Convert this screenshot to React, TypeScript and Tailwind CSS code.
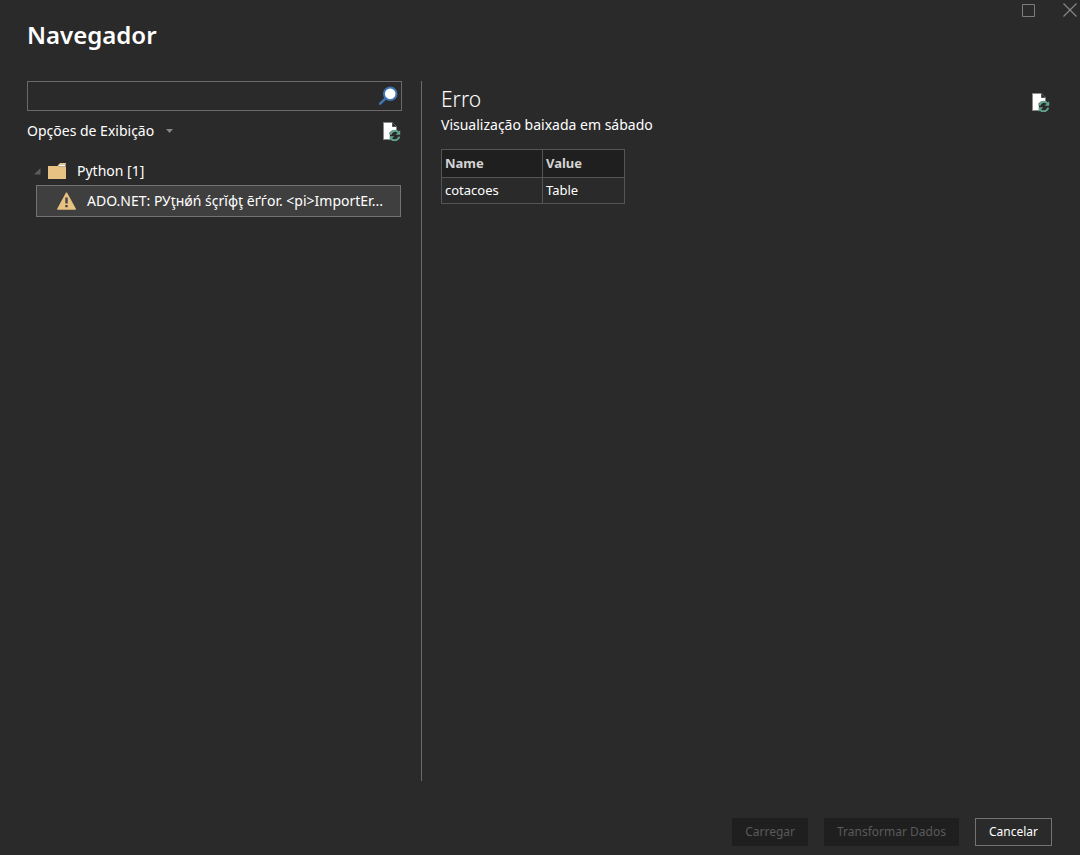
import { useState } from 'react';

interface PreviewRow {
  name: string;
  value: string;
}

const rows: PreviewRow[] = [{ name: 'cotacoes', value: 'Table' }];

function SearchIcon() {
  return (
    <svg width="20" height="20" viewBox="0 0 20 20" aria-hidden="true">
      <path d="M2.2 17.6 8 12" stroke="#3f74b0" strokeWidth="2.6" strokeLinecap="round" />
      <circle cx="12.2" cy="7.800" r="6.3" fill="#fff" stroke="#3f74b0" strokeWidth="2" />
    </svg>
  );
}

function RefreshIcon() {
  return (
    <svg width="19" height="20" viewBox="0 0 19 20" aria-hidden="true">
      <path d="M1.5 1.5h9l4 4v13h-13z" fill="#fff" stroke="#8a8a8a" />
      <path d="M10.5 1.5v4h4" fill="#2a2a2a" stroke="#555" />
      <path d="M7.5 11.5 10 9.5h9V20H8.5z" fill="#2a2a2a" />
      <path d="M8.6 13.6a4.5 4.5 0 0 1 7.8-2.2M17.2 15.6a4.5 4.5 0 0 1-7.8 2.2" fill="none" stroke="#63a58d" strokeWidth="2" />
      <path d="M18.2 9.2v4.6h-4.6zM7.6 19.8v-4.6h4.6z" fill="#63a58d" />
    </svg>
  );
}

function FolderIcon() {
  return (
    <svg width="20" height="18" viewBox="0 0 20 18" aria-hidden="true">
      <path d="M12 2.2h6.500v2.300h-8z" fill="#fff" />
      <path d="M1 4h9.500L13 1h6v1.200h-5.500L11.500 4.500H19V17H1z" fill="#e8c282" />
    </svg>
  );
}

function WarningIcon() {
  return (
    <svg width="20" height="18" viewBox="0 0 20 18" aria-hidden="true">
      <path d="M9.5 1.2 18.3 17H.8z" fill="#e8c282" stroke="#e8c282" strokeWidth="1.4" strokeLinejoin="round" />
      <path d="M8.300 5.500h2.400v6H8.300zM8.300 13h2.400v2.300H8.300z" fill="#444" />
    </svg>
  );
}

export default function App() {
  const [search, setSearch] = useState('');

  return (
    <div className="min-h-screen flex flex-col bg-[#2a2a2a] text-white font-['Noto_Sans','Open_Sans',sans-serif] text-sm">
      <header className="flex items-start justify-between pl-[27px] pr-[3px]">
        <h1 className="pt-[18px] text-2xl leading-[34px] font-semibold">Navegador</h1>
        <div className="flex gap-7 pt-[3px]">
          <button type="button" aria-label="Maximizar">
            <svg width="13" height="13" viewBox="0 0 13 13" aria-hidden="true">
              <path d="M.5.5h12v12H.5z" fill="none" stroke="#7d7d7d" />
            </svg>
          </button>
          <button type="button" aria-label="Fechar">
            <svg width="14" height="14" viewBox="0 0 14 14" aria-hidden="true">
              <path d="m.5.5 13 13M13.5.5l-13 13" fill="none" stroke="#8a8a8a" strokeWidth="1.1" />
            </svg>
          </button>
        </div>
      </header>

      <main className="flex-1 flex mt-[29px] pl-[27px] pr-[30px]">
        <section className="w-[375px] mr-[19px] shrink-0">
          <div className="flex items-center h-[30px] pr-[3px] border border-[#6a6a6a]">
            <input
              type="text"
              aria-label="Pesquisar"
              value={search}
              onChange={(e) => setSearch(e.target.value)}
              className="flex-1 min-w-0 h-full px-2 bg-transparent outline-none"
            />
            <button type="button" aria-label="Buscar">
              <SearchIcon />
            </button>
          </div>

          <div className="flex items-center justify-between mt-2 pr-px">
            <button type="button" className="flex items-center gap-3 leading-6">
              Opções de Exibição
              <svg width="7" height="4" viewBox="0 0 7 4" aria-hidden="true">
                <path d="M0 0h7L3.5 4z" fill="#858585" />
              </svg>
            </button>
            <button type="button" aria-label="Atualizar">
              <RefreshIcon />
            </button>
          </div>

          <ul className="mt-3.5 pl-[7px]">
            <li>
              <button type="button" className="flex items-center h-7">
                <svg width="7" height="7" viewBox="0 0 7 7" aria-hidden="true">
                  <path d="M6.5 0v6.500H0z" fill="#5c5c5c" />
                </svg>
                <span className="ml-1.5 mr-2.5">
                  <FolderIcon />
                </span>
                Python [1]
              </button>
              <ul className="pl-0.5 pr-px">
                <li>
                  <button
                    type="button"
                    className="flex items-center w-full h-8 pl-5 pr-1 bg-[#3f3f3f] border border-[#737373] text-left whitespace-nowrap"
                  >
                    <WarningIcon />
                    <span className="ml-2.5">ADO.NET: РУţнǿń śçrĭφţ ēґѓor. &lt;pi&gt;ImportEr...</span>
                  </button>
                </li>
              </ul>
            </li>
          </ul>
        </section>

        <section className="flex-1 border-l border-[#6a6a6a] pl-[19px]">
          <div className="flex items-start justify-between">
            <div>
              <h2 className="pt-1 text-[21px] leading-7 font-light">Erro</h2>
              <p className="leading-6">Visualização baixada em sábado</p>
            </div>
            <button type="button" aria-label="Atualizar visualização" className="mt-[11px]">
              <RefreshIcon />
            </button>
          </div>

          <table className="mt-3 border-collapse text-left text-[13px]">
            <thead>
              <tr className="h-7 bg-[#1f1f1f] text-[#d4d4d4]">
                <th className="w-[101px] px-[3px] border border-[#555] font-bold">Name</th>
                <th className="w-[82px] px-[3px] border border-[#555] font-bold">Value</th>
              </tr>
            </thead>
            <tbody>
              {rows.map((row) => (
                <tr key={row.name} className="h-[26px]">
                  <td className="px-[3px] border border-[#555]">{row.name}</td>
                  <td className="px-[3px] border border-[#555]">{row.value}</td>
                </tr>
              ))}
            </tbody>
          </table>
        </section>
      </main>

      <footer className="flex justify-end gap-4 mt-[37px] pr-7 pb-[9px] text-xs">
        <button type="button" disabled className="h-7 px-[13px] bg-[#1f1f1f] text-[#5a5a5a]">
          Carregar
        </button>
        <button type="button" disabled className="h-7 px-[13px] bg-[#1f1f1f] text-[#5a5a5a]">
          Transformar Dados
        </button>
        <button type="button" className="h-7 px-[13px] border border-[#737373]">
          Cancelar
        </button>
      </footer>
    </div>
  );
}
